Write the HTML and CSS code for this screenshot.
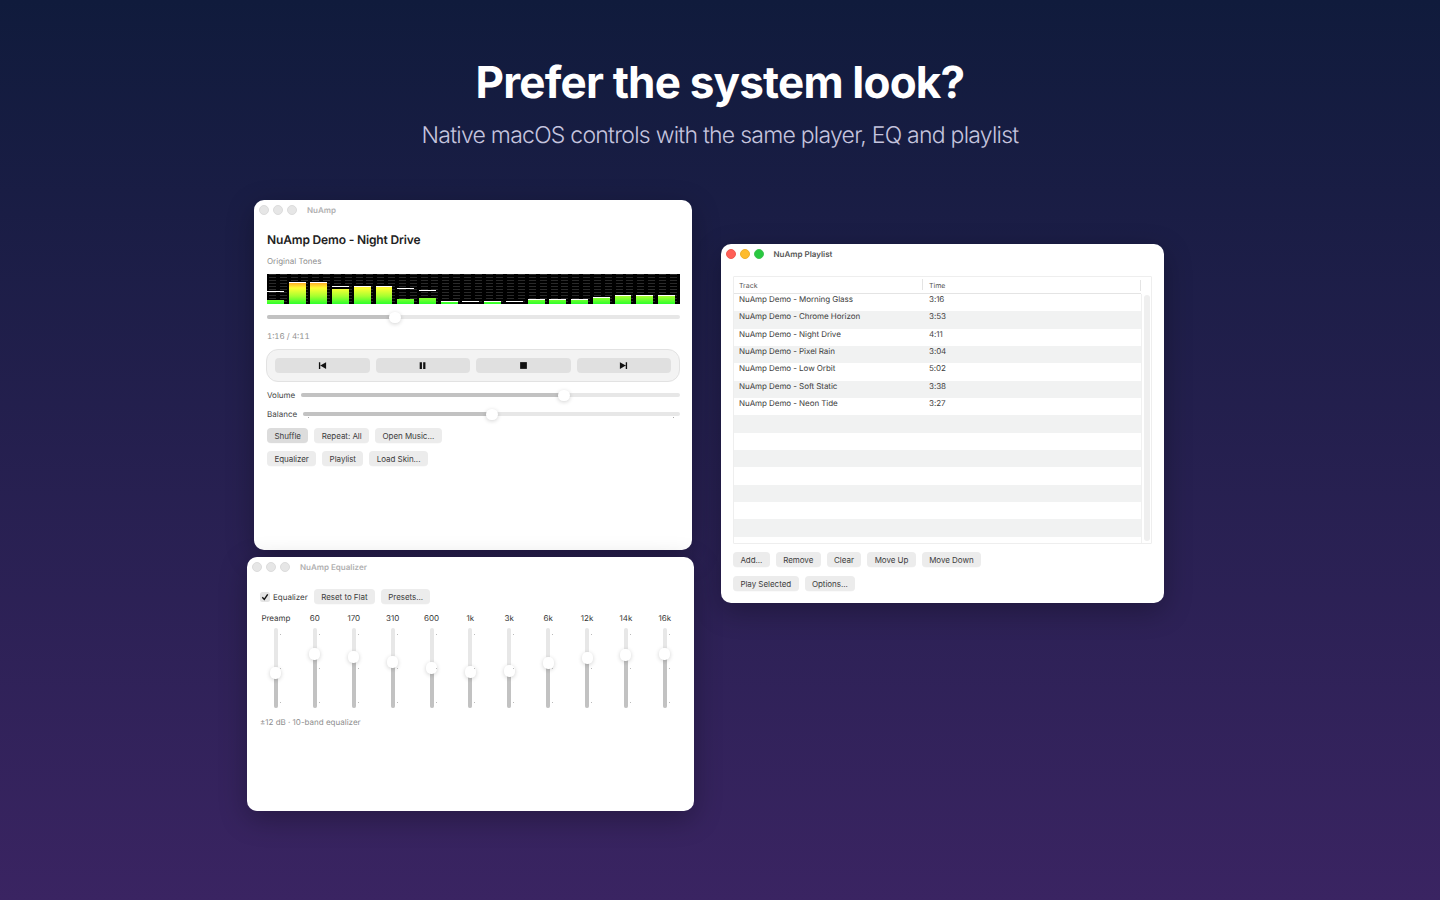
FILE: index.html
```html
<!DOCTYPE html>
<html lang="en">
<head>
  <meta charset="UTF-8">
  <title>NuAmp - Prefer the system look?</title>
  <meta name="viewport" content="width=device-width, initial-scale=1.0"/>
  <link rel="stylesheet" href="styles.css">
</head>
<body>
  <header class="hero">
    <h1>Prefer the system look?</h1>
    <p>Native macOS controls with the same player, EQ and playlist</p>
  </header>

  <main class="desktop">
    <!-- Player -->
    <section class="window player">
      <div class="titlebar">
        <span class="dots"><i></i><i></i><i></i></span>
        <span class="win-title">NuAmp</span>
      </div>
      <div class="player-body">
        <h2 class="track-title">NuAmp Demo - Night Drive</h2>
        <div class="muted tones">Original Tones</div>
        <div class="spectrum">
          <div class="band"><b style="height:4px"></b><u style="bottom:12px"></u></div>
          <div class="band"><b style="height:22px"></b><u style="bottom:21px"></u></div>
          <div class="band"><b style="height:22px"></b><u style="bottom:21px"></u></div>
          <div class="band"><b style="height:15px"></b><u style="bottom:17px"></u></div>
          <div class="band"><b style="height:18px"></b><u style="bottom:17px"></u></div>
          <div class="band"><b style="height:18px"></b><u style="bottom:17px"></u></div>
          <div class="band"><b style="height:5px"></b><u style="bottom:15px"></u></div>
          <div class="band"><b style="height:6px"></b><u style="bottom:13px"></u></div>
          <div class="band"><b style="height:2px"></b><u style="bottom:2px"></u></div>
          <div class="band"><u style="bottom:2px"></u></div>
          <div class="band"><b style="height:2px"></b><u style="bottom:2px"></u></div>
          <div class="band"><u style="bottom:2px"></u></div>
          <div class="band"><b style="height:5px"></b><u style="bottom:4px"></u></div>
          <div class="band"><b style="height:5px"></b><u style="bottom:4px"></u></div>
          <div class="band"><b style="height:5px"></b><u style="bottom:4px"></u></div>
          <div class="band"><b style="height:6px"></b><u style="bottom:6px"></u></div>
          <div class="band"><b style="height:8px"></b><u style="bottom:8px"></u></div>
          <div class="band"><b style="height:8px"></b><u style="bottom:8px"></u></div>
          <div class="band"><b style="height:8px"></b><u style="bottom:8px"></u></div>
        </div>
        <div class="slider seek"><span class="fill" style="width:31%"></span><span class="knob" style="left:31%"></span></div>
        <div class="muted time">1:16 / 4:11</div>
        <div class="transport">
          <button class="tbtn"><svg viewBox="0 0 8 8"><path d="M0.8 1h1.2v6H0.8zM7.2 1v6L2 4z"/></svg></button>
          <button class="tbtn"><svg viewBox="0 0 8 8"><path d="M1.5 1h2v6h-2zM4.6 1h2v6h-2z"/></svg></button>
          <button class="tbtn"><svg viewBox="0 0 8 8"><path d="M1 1h6v6H1z"/></svg></button>
          <button class="tbtn"><svg viewBox="0 0 8 8"><path d="M0.8 1v6L6 4zM6 1h1.2v6H6z"/></svg></button>
        </div>
        <div class="slider-row vol">
          <label>Volume</label>
          <div class="slider"><span class="fill" style="width:69.5%"></span><span class="knob" style="left:69.5%"></span></div>
        </div>
        <div class="slider-row bal">
          <label>Balance</label>
          <div class="slider"><span class="fill" style="width:50%"></span><span class="knob" style="left:50%"></span><span class="tick tick-l"></span><span class="tick tick-r"></span></div>
        </div>
        <div class="btn-row first">
          <button class="btn on">Shuffle</button>
          <button class="btn">Repeat: All</button>
          <button class="btn">Open Music...</button>
        </div>
        <div class="btn-row">
          <button class="btn">Equalizer</button>
          <button class="btn">Playlist</button>
          <button class="btn">Load Skin...</button>
        </div>
      </div>
    </section>

    <!-- Equalizer -->
    <section class="window equalizer">
      <div class="titlebar">
        <span class="dots"><i></i><i></i><i></i></span>
        <span class="win-title">NuAmp Equalizer</span>
      </div>
      <div class="eq-body">
        <div class="btn-row eq-top">
          <label class="check"><span class="box"><svg viewBox="0 0 10 10"><path d="M2.3 5.2l2 2.2 3.4-5"/></svg></span>Equalizer</label>
          <button class="btn">Reset to Flat</button>
          <button class="btn">Presets...</button>
        </div>
        <div class="bands">
          <div class="eq-col"><span>Preamp</span><div class="vslider"><span class="vfill" style="top:45px"></span><span class="vknob" style="top:45px"></span><em></em></div></div>
          <div class="eq-col"><span>60</span><div class="vslider"><span class="vfill" style="top:26px"></span><span class="vknob" style="top:26px"></span><em></em></div></div>
          <div class="eq-col"><span>170</span><div class="vslider"><span class="vfill" style="top:29px"></span><span class="vknob" style="top:29px"></span><em></em></div></div>
          <div class="eq-col"><span>310</span><div class="vslider"><span class="vfill" style="top:34px"></span><span class="vknob" style="top:34px"></span><em></em></div></div>
          <div class="eq-col"><span>600</span><div class="vslider"><span class="vfill" style="top:40px"></span><span class="vknob" style="top:40px"></span><em></em></div></div>
          <div class="eq-col"><span>1k</span><div class="vslider"><span class="vfill" style="top:44px"></span><span class="vknob" style="top:44px"></span><em></em></div></div>
          <div class="eq-col"><span>3k</span><div class="vslider"><span class="vfill" style="top:43px"></span><span class="vknob" style="top:43px"></span><em></em></div></div>
          <div class="eq-col"><span>6k</span><div class="vslider"><span class="vfill" style="top:35px"></span><span class="vknob" style="top:35px"></span><em></em></div></div>
          <div class="eq-col"><span>12k</span><div class="vslider"><span class="vfill" style="top:30px"></span><span class="vknob" style="top:30px"></span><em></em></div></div>
          <div class="eq-col"><span>14k</span><div class="vslider"><span class="vfill" style="top:27px"></span><span class="vknob" style="top:27px"></span><em></em></div></div>
          <div class="eq-col"><span>16k</span><div class="vslider"><span class="vfill" style="top:26px"></span><span class="vknob" style="top:26px"></span><em></em></div></div>
        </div>
        <div class="muted eq-note">±12 dB · 10-band equalizer</div>
      </div>
    </section>

    <!-- Playlist -->
    <section class="window playlist">
      <div class="titlebar">
        <span class="dots color"><i></i><i></i><i></i></span>
        <span class="win-title">NuAmp Playlist</span>
      </div>
      <div class="pl-body">
        <div class="table">
          <div class="table-head">
            <span class="col-track">Track</span>
            <span class="col-time">Time</span>
          </div>
          <div class="table-main">
            <div class="rows">
              <div class="row"><span class="col-track">NuAmp Demo - Morning Glass</span><span class="col-time">3:16</span></div>
              <div class="row"><span class="col-track">NuAmp Demo - Chrome Horizon</span><span class="col-time">3:53</span></div>
              <div class="row"><span class="col-track">NuAmp Demo - Night Drive</span><span class="col-time">4:11</span></div>
              <div class="row"><span class="col-track">NuAmp Demo - Pixel Rain</span><span class="col-time">3:04</span></div>
              <div class="row"><span class="col-track">NuAmp Demo - Low Orbit</span><span class="col-time">5:02</span></div>
              <div class="row"><span class="col-track">NuAmp Demo - Soft Static</span><span class="col-time">3:38</span></div>
              <div class="row"><span class="col-track">NuAmp Demo - Neon Tide</span><span class="col-time">3:27</span></div>
              <div class="row"></div>
              <div class="row"></div>
              <div class="row"></div>
              <div class="row"></div>
              <div class="row"></div>
              <div class="row"></div>
              <div class="row"></div>
              <div class="row"></div>
            </div>
            <div class="scrollbar"><span></span></div>
          </div>
        </div>
        <div class="btn-row first">
          <button class="btn">Add...</button>
          <button class="btn">Remove</button>
          <button class="btn">Clear</button>
          <button class="btn">Move Up</button>
          <button class="btn">Move Down</button>
        </div>
        <div class="btn-row second">
          <button class="btn">Play Selected</button>
          <button class="btn">Options...</button>
        </div>
      </div>
    </section>
  </main>
</body>
</html>
```

FILE: styles.css
```css
* {
  box-sizing: border-box;
}

html, body {
  height: 100%;
}

body {
  margin: 0;
  overflow: hidden;
  font-family: Inter, "Liberation Sans", sans-serif;
  text-rendering: geometricPrecision;
  color: #2a2a2a;
  background: linear-gradient(180deg, #101b3c 0%, #3a2462 100%);
}

/* Heading */
.hero {
  padding-top: 54px;
  text-align: center;
}

.hero h1 {
  margin: 0;
  font-size: 44px;
  line-height: 56px;
  font-weight: 700;
  letter-spacing: -0.8px;
  color: #fff;
}

.hero p {
  margin: 10px 0 0;
  font-size: 23px;
  line-height: 30px;
  font-weight: 300;
  letter-spacing: -0.75px;
  color: #c5c4de;
}

/* Windows sit on a free canvas */
.desktop {
  position: absolute;
  inset: 0;
}

.window {
  position: absolute;
  background: #fff;
  border-radius: 10px;
  box-shadow: 0 8px 28px rgba(0, 0, 0, 0.28);
}

.player {
  left: 254px;
  top: 200px;
  width: 438px;
  height: 350px;
}

.equalizer {
  left: 247px;
  top: 557px;
  width: 447px;
  height: 254px;
}

.playlist {
  left: 721px;
  top: 244px;
  width: 443px;
  height: 359px;
}

.titlebar {
  display: flex;
  align-items: center;
  height: 20px;
  padding-left: 5px;
}

.playlist .titlebar {
  padding-left: 4.5px;
}

.dots {
  display: flex;
  gap: 4.2px;
  width: 48px;
}

.dots i {
  width: 10px;
  height: 10px;
  border-radius: 50%;
  background: #e6e6e6;
  border: 1px solid #dcdcdc;
}

.dots.color i:nth-child(1) {
  background: #ff5f57;
  border-color: #ef5a52;
}

.dots.color i:nth-child(2) {
  background: #febc2e;
  border-color: #eeb02b;
}

.dots.color i:nth-child(3) {
  background: #28c840;
  border-color: #42c454;
}

.win-title {
  font-size: 8px;
  font-weight: 600;
  color: #b0b0b0;
}

.playlist .win-title {
  color: #555;
}

.muted {
  font-size: 8px;
  line-height: 10px;
  color: #8e8e8e;
}

/* Buttons */
.btn {
  height: 15px;
  padding: 1px 7.4px 0;
  border: 0;
  border-radius: 4px;
  background: #ececec;
  font-family: inherit;
  font-size: 8px;
  line-height: 14px;
  letter-spacing: -0.04px;
  color: #3c3c3c;
  box-shadow: 0 0.5px 0.5px rgba(0, 0, 0, 0.04);
}

.btn.on {
  background: #dcdcdc;
}

.btn-row {
  display: flex;
  gap: 6px;
  margin-top: 8px;
}

.player .first {
  margin-top: 9px;
}

.playlist .second {
  margin-top: 9px;
}

/* Player */
.player-body {
  padding: 0 12px 0 13px;
}

.track-title {
  margin: 12px 0 0;
  font-size: 12px;
  line-height: 16px;
  font-weight: 600;
  letter-spacing: -0.15px;
  color: #222;
}

.tones {
  margin-top: 8px;
}

.spectrum {
  display: flex;
  justify-content: space-between;
  height: 30px;
  margin-top: 8px;
  padding-right: 5px;
  background-color: #000;
  background-image:
    repeating-linear-gradient(90deg, #000 0 2px, transparent 2px 9px, #000 9px 10.83px),
    repeating-linear-gradient(0deg, #000 0 2px, #2a2a2a 2px 3px);
}

.band {
  position: relative;
  width: 16.9px;
}

.band b {
  position: absolute;
  left: 0;
  right: 0;
  bottom: 0;
  background: linear-gradient(0deg, #2cff2c 0, #a8ff30 8px, #ffff33 16px, #ffc02a 20px, #ff9422 23px) left bottom / 100% 30px no-repeat;
}

.band u {
  position: absolute;
  left: 0;
  right: 0;
  height: 1.3px;
  background: #fff;
}

.slider {
  position: relative;
  height: 4px;
  flex: 1;
  border-radius: 2px;
  background: #e7e7e7;
}

.fill {
  position: absolute;
  left: 0;
  top: 0;
  bottom: 0;
  border-radius: 2px;
  background: #c2c2c2;
}

.knob {
  position: absolute;
  top: -3.5px;
  width: 12px;
  height: 11px;
  margin-left: -6px;
  border-radius: 6px;
  background: #fff;
  box-shadow: 0 1px 4px rgba(0, 0, 0, 0.18);
}

.tick {
  position: absolute;
  top: 5px;
  width: 1px;
  height: 1px;
  background: #aaa;
}

.tick-l {
  left: 5px;
}

.tick-r {
  right: 6px;
}

.seek {
  margin-top: 11px;
}

.time {
  margin-top: 12px;
  font-variant-numeric: tabular-nums;
}

.transport {
  display: flex;
  gap: 6px;
  height: 33px;
  margin: 8px 0 0 -1px;
  padding: 8px;
  border: 1px solid #e2e2e2;
  border-radius: 12px;
  background: #f3f3f3;
}

.tbtn {
  display: flex;
  align-items: center;
  justify-content: center;
  flex: 1;
  height: 15px;
  padding: 0;
  border: 0;
  border-radius: 4px;
  background: #e0e0e0;
}

.tbtn svg {
  width: 9px;
  height: 9px;
  fill: #111;
}

.slider-row {
  display: flex;
  align-items: center;
  height: 10px;
}

.slider-row label {
  font-size: 8px;
  color: #444;
}

.vol {
  margin-top: 8px;
  gap: 6px;
}

.bal {
  margin-top: 9px;
  gap: 6px;
}

/* Equalizer */
.eq-body {
  padding: 12px 13px 0;
}

.eq-top {
  align-items: center;
  margin-top: 0;
}

.check {
  display: flex;
  align-items: center;
  gap: 3px;
  font-size: 8px;
  color: #3c3c3c;
}

.box {
  width: 10px;
  height: 10px;
  border-radius: 2.5px;
  background: #e4e4e4;
}

.box svg {
  display: block;
  fill: none;
  stroke: #111;
  stroke-width: 1.4;
}

.bands {
  display: grid;
  grid-template-columns: repeat(11, 38.9px);
  margin: 9px 0 0 -3.5px;
}

.eq-col {
  display: flex;
  flex-direction: column;
  align-items: center;
  font-size: 8px;
  line-height: 10px;
  color: #333;
}

.vslider {
  position: relative;
  width: 4px;
  height: 80px;
  margin-top: 5px;
  border-radius: 2px;
  background: #e7e7e7;
}

.vfill {
  position: absolute;
  left: 0;
  right: 0;
  bottom: 0;
  border-radius: 2px;
  background: #c2c2c2;
}

.vknob {
  position: absolute;
  left: -3.5px;
  width: 11px;
  height: 12px;
  margin-top: -6px;
  border-radius: 5px;
  background: #fff;
  box-shadow: 0 1px 4px rgba(0, 0, 0, 0.18);
}

/* three ticks beside each band slider */
.vslider em {
  position: absolute;
  left: 6px;
  top: 6px;
  width: 1px;
  height: 69px;
  background:
    linear-gradient(#bbb, #bbb) 0 0 / 1px 1px no-repeat,
    linear-gradient(#bbb, #bbb) 0 34px / 1px 1px no-repeat,
    linear-gradient(#bbb, #bbb) 0 68px / 1px 1px no-repeat;
}

.eq-note {
  margin-top: 9px;
}

/* Playlist */
.pl-body {
  padding: 12px 12px 0;
}

.table {
  height: 268px;
  border: 1px solid #eee;
  border-radius: 1px;
  overflow: hidden;
}

.table-head {
  position: relative;
  display: flex;
  align-items: center;
  height: 17px;
  margin-right: 10px;
  border-bottom: 1px solid #e4e4e4;
  font-size: 7px;
  color: #555;
  padding-top: 1px;
}

/* header column dividers */
.table-head::after {
  content: "";
  position: absolute;
  right: 0;
  top: 3px;
  width: 1px;
  height: 11px;
  background: #e4e4e4;
}

.col-track {
  position: relative;
  width: 189px;
  padding-left: 5px;
  flex: none;
}

.table-head .col-track::after {
  content: "";
  position: absolute;
  right: 0;
  top: -2px;
  width: 1px;
  height: 11px;
  background: #e4e4e4;
}

.col-time {
  padding-left: 6px;
}

.table-main {
  display: flex;
}

.rows {
  flex: 1;
}

.row {
  display: flex;
  height: 17.35px;
  font-size: 8px;
  line-height: 10px;
  letter-spacing: -0.06px;
  color: #3c3c3c;
}

.row:nth-child(even) {
  background: #f1f2f2;
}

.scrollbar {
  width: 10px;
  padding: 1px 1.5px;
  border-left: 1px solid #f0f0f0;
}

.scrollbar span {
  display: block;
  height: 246px;
  border-radius: 3px;
  background: #efefef;
}
```
